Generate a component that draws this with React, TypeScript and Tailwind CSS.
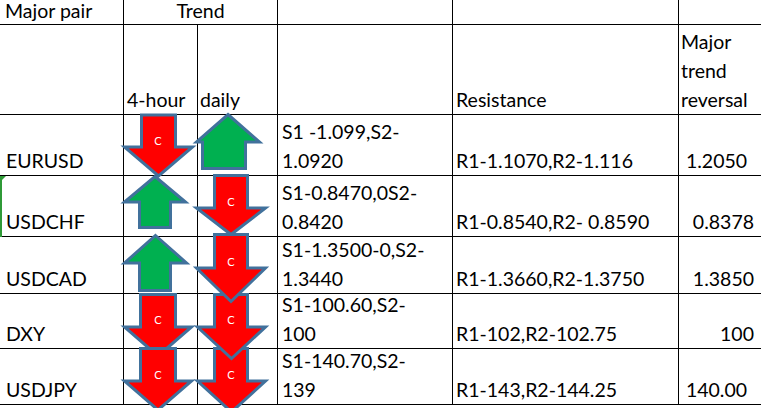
import * as React from 'react';

type Row = {
  pair: string;
  support: [string, string];
  resistance: string;
  reversal: string;
  align: 'center' | 'right';
  selected?: boolean;
};

const ROWS: Row[] = [
  { pair: 'EURUSD', support: ['S1 -1.099,S2-', '1.0920'], resistance: 'R1-1.1070,R2-1.116', reversal: '1.2050', align: 'center' },
  { pair: 'USDCHF', support: ['S1-0.8470,0S2-', '0.8420'], resistance: 'R1-0.8540,R2- 0.8590', reversal: '0.8378', align: 'right', selected: true },
  { pair: 'USDCAD', support: ['S1-1.3500-0,S2-', '1.3440'], resistance: 'R1-1.3660,R2-1.3750', reversal: '1.3850', align: 'right' },
  { pair: 'DXY', support: ['S1-100.60,S2-', '100'], resistance: 'R1-102,R2-102.75', reversal: '100', align: 'right' },
  { pair: 'USDJPY', support: ['S1-140.70,S2-', '139'], resistance: 'R1-143,R2-144.25', reversal: '140.00', align: 'center' }
];

// arrow shapes: head x0..x1, shaft sx0..sx1, top y0, head line yh, bottom y1
type Arrow = { dir: 'up' | 'down'; x0: number; x1: number; sx0: number; sx1: number; y0: number; yh: number; y1: number; label?: [number, number] };

const ARROWS: Arrow[] = [
  { dir: 'down', x0: 124.5, x1: 192.5, sx0: 141.5, sx1: 175.5, y0: 115, yh: 147, y1: 176, label: [158, 141] },
  { dir: 'up', x0: 196.5, x1: 259.5, sx0: 202.5, sx1: 245.5, y0: 114.5, yh: 142, y1: 168.5 },
  { dir: 'down', x0: 196.5, x1: 265.5, sx0: 214.5, sx1: 247.5, y0: 175.5, yh: 208, y1: 234.5, label: [231, 202] },
  { dir: 'up', x0: 124.5, x1: 185.5, sx0: 139.5, sx1: 170.5, y0: 176.5, yh: 202, y1: 227.5 },
  { dir: 'up', x0: 124.5, x1: 186.5, sx0: 139.5, sx1: 170.5, y0: 235.5, yh: 263, y1: 290.5 },
  { dir: 'down', x0: 197.5, x1: 265.5, sx0: 214.5, sx1: 247.5, y0: 348.5, yh: 381, y1: 412, label: [231, 375] },
  { dir: 'down', x0: 197.5, x1: 265.5, sx0: 214.5, sx1: 247.5, y0: 294.5, yh: 327, y1: 358.5, label: [231, 320] },
  { dir: 'down', x0: 196.5, x1: 265.5, sx0: 214.5, sx1: 247.5, y0: 234.5, yh: 268, y1: 301.5, label: [231, 262] },
  { dir: 'down', x0: 124.5, x1: 191.5, sx0: 140.5, sx1: 175.5, y0: 294.5, yh: 327, y1: 356, label: [158, 320] },
  { dir: 'down', x0: 124.5, x1: 191.5, sx0: 140.5, sx1: 175.5, y0: 348.5, yh: 381, y1: 410, label: [158, 375] }
];

const arrowPoints = (a: Arrow): string => {
  const mid = (a.x0 + a.x1) / 2;
  const pts =
    a.dir === 'down'
      ? [[a.sx0, a.y0], [a.sx1, a.y0], [a.sx1, a.yh], [a.x1, a.yh], [mid, a.y1], [a.x0, a.yh], [a.sx0, a.yh]]
      : [[mid, a.y0], [a.x1, a.yh], [a.sx1, a.yh], [a.sx1, a.y1], [a.sx0, a.y1], [a.sx0, a.yh], [a.x0, a.yh]];
  return pts.map((p) => p.join(',')).join(' ');
};

const cell = 'flex items-end border-b border-r border-black';
const topCell = 'flex items-start border-b border-r border-black leading-[22px]';

export default function App(): React.JSX.Element {
  return (
    <div className="relative h-[408px] w-[761px] overflow-hidden bg-white font-['Lato',sans-serif] text-[19.5px] leading-[29px] text-black">
      <div className="grid grid-cols-[124px_74px_80px_175px_226px_1fr] grid-rows-[25px_90px_61px_61px_57px_55px_56px]">
        {/* header row 1 */}
        <div className={`${topCell} pl-[5px]`}>Major pair</div>
        <div className={`${topCell} col-span-2 justify-center`}>Trend</div>
        <div className={topCell} />
        <div className={topCell} />
        <div className="border-b border-black" />

        {/* header row 2 */}
        <div className={cell} />
        <div className={`${cell} pl-[3px]`}>4-hour</div>
        <div className={`${cell} pl-[2px]`}>daily</div>
        <div className={cell} />
        <div className={`${cell} pl-[3px]`}>Resistance</div>
        <div className="flex items-end border-b border-black pl-[2px]">
          Major<br />trend<br />reversal
        </div>

        {ROWS.map((row) => (
          <React.Fragment key={row.pair}>
            <div className={`${cell} relative pl-[6px]`}>
              {row.selected && (
                <>
                  <span className="absolute -bottom-px left-0 top-0 w-[2px] bg-[#2f9a37]" />
                  <span className="absolute left-0 top-0 h-0 w-0 border-r-[6px] border-t-[6px] border-r-transparent border-t-[#2f9a37]" />
                </>
              )}
              {row.pair}
            </div>
            <div className={cell} />
            <div className={cell} />
            <div className={`${cell} pl-[4px]`}>
              <span>
                {row.support[0]}
                <br />
                {row.support[1]}
              </span>
            </div>
            <div className={`${cell} pl-[3px]`}>{row.resistance}</div>
            <div className={`flex items-end border-b border-black pr-[7px] ${row.align === 'center' ? 'justify-center pr-[2px]' : 'justify-end'}`}>
              {row.reversal}
            </div>
          </React.Fragment>
        ))}
      </div>

      <svg className="pointer-events-none absolute left-0 top-0" width={761} height={408} viewBox="0 0 761 408">
        {ARROWS.map((a, i) => (
          <g key={i}>
            <polygon
              points={arrowPoints(a)}
              fill={a.dir === 'down' ? '#ff0000' : '#00b050'}
              stroke="#41719c"
              strokeWidth={3}
              strokeLinejoin="miter"
            />
            {a.label && (
              <text x={a.label[0]} y={a.label[1] + 4} textAnchor="middle" fill="#ffffff" fontSize={11} fontFamily="Lato, sans-serif">
                C
              </text>
            )}
          </g>
        ))}
      </svg>
    </div>
  );
}
